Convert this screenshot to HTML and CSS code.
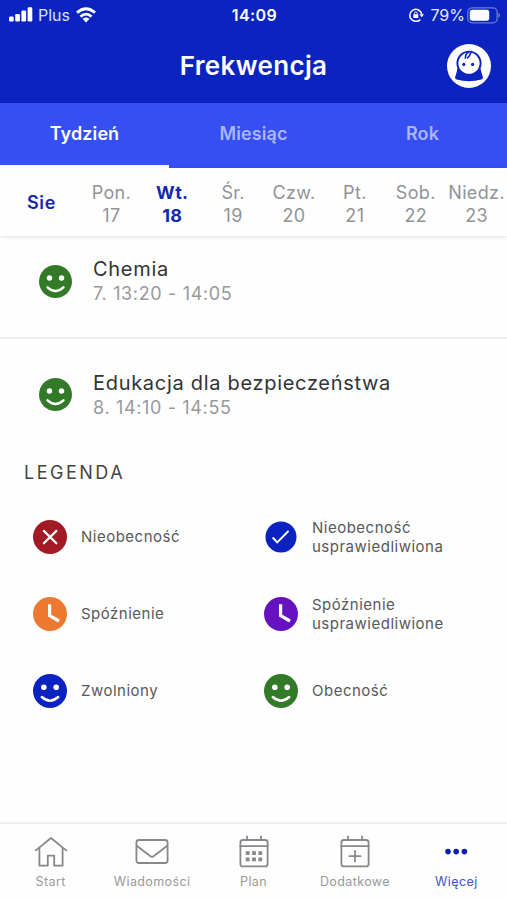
FILE: index.html
```html
<!DOCTYPE html>
<html lang="pl">
<head>
    <meta charset="UTF-8">
    <meta name="viewport" content="width=device-width, initial-scale=1.0">
    <title>Frekwencja</title>
    <link rel="stylesheet" href="styles.css">
</head>
<body>
    <!-- shared status icons -->
    <svg class="symbols" aria-hidden="true">
        <symbol id="smile" viewBox="0 0 34 34">
            <circle cx="17" cy="17" r="17" fill="currentColor"/>
            <circle cx="10.8" cy="13.3" r="2.8" fill="#fff"/>
            <circle cx="23.2" cy="13.3" r="2.8" fill="#fff"/>
            <path d="M8.8 23Q17 30.4 25.2 23" fill="none" stroke="#fff" stroke-width="2.5" stroke-linecap="round"/>
        </symbol>
        <symbol id="clock" viewBox="0 0 34 34">
            <circle cx="17" cy="17" r="17" fill="currentColor"/>
            <path d="M16.6 7.3V18.6L26 24" fill="none" stroke="#fff" stroke-width="3.2"/>
        </symbol>
        <symbol id="cross" viewBox="0 0 34 34">
            <circle cx="17" cy="17" r="17" fill="currentColor"/>
            <path d="M10.8 10.9L23.4 23.3M23.4 10.9L10.8 23.3" fill="none" stroke="#fff" stroke-width="2.2" stroke-linecap="round"/>
        </symbol>
        <symbol id="check" viewBox="0 0 34 34">
            <circle cx="17" cy="17" r="15.5" fill="currentColor"/>
            <path d="M9.2 18L13.2 22.3L24 11.5" fill="none" stroke="#fff" stroke-width="1.9" stroke-linecap="round"/>
        </symbol>
    </svg>

    <div class="app">
        <header class="header">
            <div class="status-bar">
                <div class="status-left">
                    <svg class="signal" width="24" height="16" viewBox="0 0 24 16" fill="#fff">
                        <rect x="0" y="9.5" width="4.7" height="5" rx="1.2"/>
                        <rect x="6.2" y="7" width="4.7" height="7.5" rx="1.2"/>
                        <rect x="12.4" y="3.5" width="4.7" height="11" rx="1.2"/>
                        <rect x="18.6" y=".3" width="4.7" height="14.2" rx="1.2"/>
                    </svg>
                    <span class="carrier">Plus</span>
                    <svg class="wifi" width="20" height="16" viewBox="0 0 20 16" fill="none" stroke="#fff" stroke-width="2.8">
                        <path d="M1 5.6Q10-2.2 19 5.6"/>
                        <path d="M4.5 9.6Q10 4.6 15.5 9.6"/>
                        <path d="M10 15.4L6.6 12Q10 9.2 13.4 12Z" fill="#fff" stroke="none"/>
                    </svg>
                </div>
                <span class="time">14:09</span>
                <div class="status-right">
                    <svg class="lock" width="15" height="14" viewBox="0 0 15 14" fill="none" stroke="#fff" stroke-width="1.5">
                        <path d="M11.3 11.4A6 6 0 1 1 12.7 6"/>
                        <path d="M10.4 6.2H15L12.8 9.3Z" fill="#fff" stroke="none"/>
                        <rect x="4.3" y="6.3" width="5" height="3.8" rx=".6" fill="#fff" stroke="none"/>
                        <path d="M5.4 6.6V5.3a1.4 1.4 0 0 1 2.8 0V6.6" stroke-width="1"/>
                    </svg>
                    <span class="percent">79%</span>
                    <svg class="battery" width="33" height="17" viewBox="0 0 33 17">
                        <rect x=".8" y=".8" width="29.4" height="15" rx="4.4" fill="none" stroke="#fff" stroke-opacity=".4" stroke-width="1.3"/>
                        <rect x="2.8" y="2.8" width="19.4" height="11" rx="2.4" fill="#fff"/>
                        <path d="M31.4 5.8Q33 6.4 33 8.3T31.4 10.8Z" fill="#fff" fill-opacity=".4"/>
                    </svg>
                </div>
            </div>
            <div class="title-bar">
                <h1>Frekwencja</h1>
                <svg class="avatar" width="44" height="44" viewBox="0 0 44 44">
                    <circle cx="22" cy="22" r="22" fill="#fff"/>
                    <path d="M10.3 24.4H33.6Q34.2 28.6 35.3 31.2Q36.8 34.8 34.4 35.6Q22 39 9.6 35.6Q7.2 34.8 8.7 31.2Q9.8 28.6 10.3 24.4Z" fill="#0b24bf"/>
                    <circle cx="22" cy="19.2" r="11.6" fill="#fff" stroke="#0b24bf" stroke-width="1.9"/>
                    <path d="M22 8Q17.8 10.2 18.4 14.8M24 8Q23.2 12 20 14.4" fill="none" stroke="#0b24bf" stroke-width="1.5"/>
                    <circle cx="16.8" cy="20.4" r="1.6" fill="#0b24bf"/>
                    <circle cx="25.6" cy="20.4" r="1.6" fill="#0b24bf"/>
                </svg>
            </div>
        </header>

        <nav class="tabs">
            <a class="tab active">Tydzień</a>
            <a class="tab">Miesiąc</a>
            <a class="tab">Rok</a>
        </nav>

        <div class="days">
            <div class="month">Sie</div>
            <div class="day"><span>Pon.</span><span>17</span></div>
            <div class="day selected"><span>Wt.</span><span>18</span></div>
            <div class="day"><span>Śr.</span><span>19</span></div>
            <div class="day"><span>Czw.</span><span>20</span></div>
            <div class="day"><span>Pt.</span><span>21</span></div>
            <div class="day"><span>Sob.</span><span>22</span></div>
            <div class="day"><span>Niedz.</span><span>23</span></div>
        </div>

        <main class="content">
            <div class="lesson">
                <svg class="lesson-icon green"><use href="#smile"/></svg>
                <div class="lesson-text">
                    <div class="lesson-name">Chemia</div>
                    <div class="lesson-time">7. 13:20 - 14:05</div>
                </div>
            </div>
            <div class="lesson">
                <svg class="lesson-icon green"><use href="#smile"/></svg>
                <div class="lesson-text">
                    <div class="lesson-name">Edukacja dla bezpieczeństwa</div>
                    <div class="lesson-time">8. 14:10 - 14:55</div>
                </div>
            </div>

            <h2>LEGENDA</h2>
            <div class="legend">
                <div class="legend-item">
                    <svg class="legend-icon red"><use href="#cross"/></svg>
                    <span>Nieobecność</span>
                </div>
                <div class="legend-item">
                    <svg class="legend-icon blue"><use href="#check"/></svg>
                    <span>Nieobecność<br>usprawiedliwiona</span>
                </div>
                <div class="legend-item">
                    <svg class="legend-icon orange"><use href="#clock"/></svg>
                    <span>Spóźnienie</span>
                </div>
                <div class="legend-item">
                    <svg class="legend-icon purple"><use href="#clock"/></svg>
                    <span>Spóźnienie<br>usprawiedliwione</span>
                </div>
                <div class="legend-item">
                    <svg class="legend-icon blue"><use href="#smile"/></svg>
                    <span>Zwolniony</span>
                </div>
                <div class="legend-item">
                    <svg class="legend-icon green"><use href="#smile"/></svg>
                    <span>Obecność</span>
                </div>
            </div>
        </main>

        <nav class="bottom-nav">
            <a class="nav-item">
                <svg class="nav-icon" viewBox="0 0 36 36">
                    <path d="M2.8 16.4L18 4L33.2 16.4"/>
                    <path d="M6.4 13.8V31.6H14.8V21.6H21.2V31.6H29.6V13.8"/>
                </svg>
                <span>Start</span>
            </a>
            <a class="nav-item">
                <svg class="nav-icon" viewBox="0 0 36 36">
                    <rect x="2.4" y="6" width="31.2" height="23" rx="2.5"/>
                    <path d="M2.8 11.8L16.4 22.2Q18 23.4 19.6 22.2L33.2 11.8"/>
                </svg>
                <span>Wiadomości</span>
            </a>
            <a class="nav-item">
                <svg class="nav-icon" viewBox="0 0 36 36">
                    <rect x="4.4" y="6" width="27.2" height="26.4" rx="2.5"/>
                    <path d="M4.4 12.2H31.6M11 2.4V6M25 2.4V6"/>
                    <g fill="#87888c" stroke="none">
                        <rect x="9.8" y="17.2" width="3.8" height="3.8"/>
                        <rect x="16.1" y="17.2" width="3.8" height="3.8"/>
                        <rect x="22.4" y="17.2" width="3.8" height="3.8"/>
                        <rect x="9.8" y="23.5" width="3.8" height="3.8"/>
                        <rect x="16.1" y="23.5" width="3.8" height="3.8"/>
                        <rect x="22.4" y="23.5" width="3.8" height="3.8"/>
                    </g>
                </svg>
                <span>Plan</span>
            </a>
            <a class="nav-item">
                <svg class="nav-icon" viewBox="0 0 36 36">
                    <rect x="4.4" y="6" width="27.2" height="26.4" rx="2.5"/>
                    <path d="M4.4 12.2H31.6M11 2.4V6M25 2.4V6M12.4 22.2H23.6M18 16.8V27.6"/>
                </svg>
                <span>Dodatkowe</span>
            </a>
            <a class="nav-item active">
                <svg class="nav-icon" viewBox="0 0 36 36">
                    <circle cx="10" cy="17.6" r="2.8"/>
                    <circle cx="18.2" cy="17.6" r="2.8"/>
                    <circle cx="26.4" cy="17.6" r="2.8"/>
                </svg>
                <span>Więcej</span>
            </a>
        </nav>
    </div>
</body>
</html>
```
FILE: styles.css
```css
* {
    box-sizing: border-box;
}
body {
    margin: 0;
    font-family: Inter, "Liberation Sans", sans-serif;
    background: #fefefe;
}
.symbols {
    display: none;
}
svg {
    display: block;
    flex-shrink: 0;
}
.app {
    display: flex;
    flex-direction: column;
    height: 900px;
    overflow: hidden;
}

/* header */
.header {
    height: 103px;
    background: #0b24bf;
    color: #fff;
}
.status-bar {
    display: grid;
    grid-template-columns: 1fr auto 1fr;
    align-items: center;
    height: 30px;
    padding: 0 7px 0 9px;
    font-size: 16px;
    line-height: 20px;
}
.status-left,
.status-right {
    display: flex;
    align-items: center;
}
.status-right {
    justify-content: flex-end;
}
.signal {
    margin-right: 5px;
}
.carrier {
    margin-right: 6px;
    opacity: .85;
}
.time {
    font-weight: 600;
    letter-spacing: .4px;
}
.lock {
    margin-right: 6px;
}
.percent {
    margin-right: 2px;
    opacity: .9;
}
.title-bar {
    display: grid;
    grid-template-columns: 1fr auto 1fr;
    align-items: center;
    height: 71px;
    padding-right: 16px;
}
h1 {
    grid-column: 2;
    margin: 0 0 0 16px;
    font-size: 26px;
    font-weight: 600;
    letter-spacing: .35px;
}
.avatar {
    justify-self: end;
}

/* tabs */
.tabs {
    display: flex;
    height: 65px;
    background: #364ff2;
}
.tab {
    flex: 1;
    color: #aab5fa;
    font-size: 18px;
    font-weight: 600;
    line-height: 62px;
    text-align: center;
    letter-spacing: .1px;
}
.tab.active {
    color: #fff;
    border-bottom: 3px solid #fff;
}

/* week strip */
.days {
    display: flex;
    align-items: center;
    height: 68px;
    padding-top: 4px;
    color: #929396;
    font-size: 18px;
    line-height: 23px;
    letter-spacing: .35px;
    box-shadow: 0 1px 4px rgba(0, 0, 0, .12);
}
.month {
    width: 81px;
    padding: 0 0 4px 2px;
    color: #1427b0;
    font-weight: 600;
    text-align: center;
    letter-spacing: .6px;
}
.day {
    display: flex;
    flex-direction: column;
    flex: 1 1 0;
    min-width: 0;
    align-items: center;
}
.day.selected {
    color: #1427b0;
    font-weight: 700;
}

/* lessons */
.content {
    flex: 1;
}
.lesson {
    display: flex;
    align-items: center;
    height: 111px;
    padding: 0 38px;
}
.lesson:first-child {
    height: 103px;
    padding-bottom: 11px;
    border-bottom: 2px solid #ececec;
}
.lesson-icon {
    width: 33px;
    height: 33px;
    margin: 0 21px 0 1px;
}
.lesson-name {
    color: #333;
    font-size: 20px;
    line-height: 25px;
    letter-spacing: .7px;
}
.lesson-time {
    color: #99999b;
    font-size: 18px;
    line-height: 23px;
    letter-spacing: .65px;
}

/* legend */
h2 {
    margin: 11px 0 13px 24px;
    color: #444;
    font-size: 18px;
    font-weight: 400;
    line-height: 24px;
    letter-spacing: 2.5px;
}
.legend {
    display: grid;
    grid-template-columns: 231px 231px;
    grid-auto-rows: 77px;
    padding-left: 33px;
}
.legend-item {
    display: flex;
    align-items: center;
    color: #58585a;
    font-size: 15px;
    line-height: 19px;
    letter-spacing: .5px;
}
.legend-icon {
    width: 34px;
    height: 34px;
    margin-right: 14px;
}
.green {
    color: #327a27;
}
.red {
    color: #a21a25;
}
.orange {
    color: #ed782f;
}
.purple {
    color: #6712c0;
}
.blue {
    color: #0922c0;
}

/* bottom navigation */
.bottom-nav {
    display: flex;
    height: 78px;
    padding-top: 10px;
    border-top: 2px solid #ededed;
}
.nav-item {
    display: flex;
    flex: 1 1 0;
    flex-direction: column;
    align-items: center;
    color: #98999c;
    font-size: 12.5px;
    line-height: 16px;
    letter-spacing: .4px;
}
.nav-icon {
    width: 36px;
    height: 36px;
    margin-bottom: 4px;
    fill: none;
    stroke: #87888c;
    stroke-width: 1.8;
    stroke-linejoin: round;
    stroke-linecap: round;
}
.nav-item.active {
    color: #4a50cc;
}
.nav-item.active .nav-icon {
    fill: #0b1fae;
    stroke: none;
}
```
